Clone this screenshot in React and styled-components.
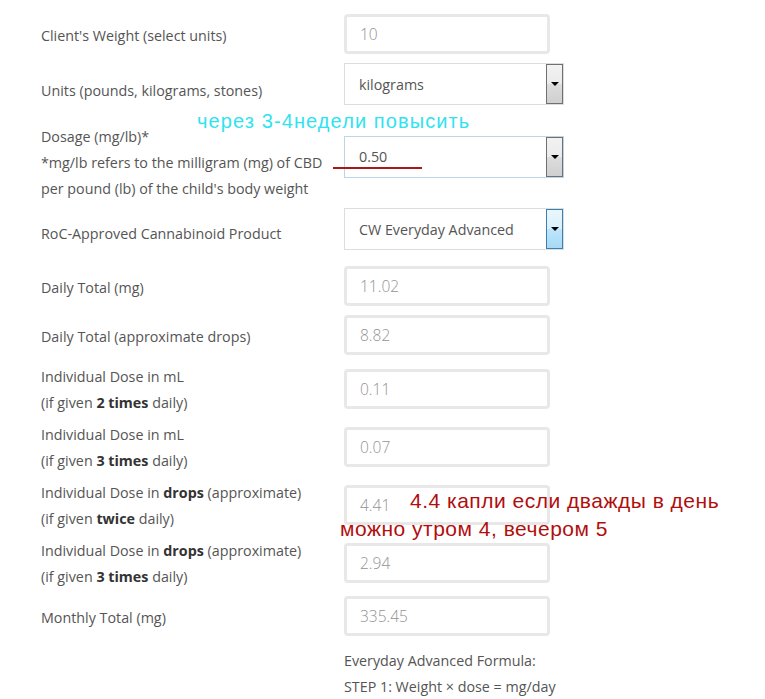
import styled, { createGlobalStyle } from "styled-components";

const GlobalStyle = createGlobalStyle`
  html, body {
    margin: 0;
    padding: 0;
    background: #fff;
  }
  body {
    font-family: "Open Sans", "Liberation Sans", sans-serif;
    font-size: 14.3px;
    color: #555;
  }
`;

const rows = [
  { label: ["Client's Weight (select units)"], type: "input", value: "10" },
  { label: ["Units (pounds, kilograms, stones)"], type: "select", value: "kilograms" },
  {
    label: [
      "Dosage (mg/lb)*",
      "*mg/lb refers to the milligram (mg) of CBD",
      "per pound (lb) of the child's body weight",
    ],
    type: "select",
    value: "0.50",
    variant: "focus",
  },
  {
    label: ["RoC-Approved Cannabinoid Product"],
    type: "select",
    value: "CW Everyday Advanced",
    variant: "hover",
    tight: true,
  },
  { label: ["Daily Total (mg)"], type: "input", value: "11.02" },
  { label: ["Daily Total (approximate drops)"], type: "input", value: "8.82" },
  { label: ["Individual Dose in mL", ["(if given ", <b key="b">2 times</b>, " daily)"]], type: "input", value: "0.11" },
  { label: ["Individual Dose in mL", ["(if given ", <b key="b">3 times</b>, " daily)"]], type: "input", value: "0.07" },
  {
    label: [
      ["Individual Dose in ", <b key="b">drops</b>, " (approximate)"],
      ["(if given ", <b key="b">twice</b>, " daily)"],
    ],
    type: "input",
    value: "4.41",
  },
  {
    label: [
      ["Individual Dose in ", <b key="b">drops</b>, " (approximate)"],
      ["(if given ", <b key="b">3 times</b>, " daily)"],
    ],
    type: "input",
    value: "2.94",
  },
  { label: ["Monthly Total (mg)"], type: "input", value: "335.45" },
];

export default function App() {
  return (
    <>
      <GlobalStyle />
      <Page>
        <Form>
          {rows.map((row, i) => (
            <Row key={i}>
              <Label>
                {row.label.map((line, j) => (
                  <Line key={j}>{line}</Line>
                ))}
              </Label>
              <Cell>
                {row.type === "input" ? (
                  <Input readOnly value={row.value} />
                ) : (
                  <SelectBox $variant={row.variant} $tight={row.tight}>
                    <SelectValue>{row.value}</SelectValue>
                    <ArrowButton $variant={row.variant}>
                      <Arrow />
                    </ArrowButton>
                  </SelectBox>
                )}
              </Cell>
            </Row>
          ))}
        </Form>
        <Formula>
          <Line>Everyday Advanced Formula:</Line>
          <Line>STEP 1: Weight × dose = mg/day</Line>
        </Formula>

        {/* handwritten notes on top of the screenshot */}
        <CyanNote>через 3-4недели повысить</CyanNote>
        <Underline />
        <RedNote>
          4.4 капли если дважды в день
          <br />
          можно утром 4, вечером 5
        </RedNote>
      </Page>
    </>
  );
}

const Page = styled.div`
  position: relative;
  width: 765px;
  height: 699px;
  overflow: hidden;
  padding: 11px 0 0 41px;
  box-sizing: border-box;
`;

const Form = styled.div`
  display: flex;
  flex-direction: column;
`;

const Row = styled.div`
  display: grid;
  grid-template-columns: 303px 1fr;
  align-items: center;
  padding: 3px 0;
`;

const Label = styled.div`
  line-height: 26px;
  color: #555;

  b {
    font-weight: 700;
    color: #333;
  }
`;

const Line = styled.div`
  white-space: nowrap;
`;

const Cell = styled.div`
  display: flex;
`;

const Input = styled.input`
  box-sizing: border-box;
  width: 206px;
  height: 40px;
  margin: 0 0 3px;
  padding: 0 0 0 13px;
  border: 3px solid #e8e8e8;
  border-radius: 4px;
  font-family: "Open Sans", sans-serif;
  font-weight: 300;
  font-size: 15.5px;
  color: #939393;
  background: #fff;
  outline: none;
`;

const SelectBox = styled.div`
  box-sizing: border-box;
  width: 220px;
  height: 42px;
  margin-bottom: ${(p) => (p.$tight ? "10px" : "13px")};
  display: flex;
  align-items: stretch;
  border: 1px solid ${(p) => (p.$variant === "focus" ? "#bcd6e8" : "#dddddd")};
  background: #fff;
`;

const SelectValue = styled.div`
  flex: 1;
  display: flex;
  align-items: center;
  padding-left: 14px;
  color: #555;
`;

const ArrowButton = styled.div`
  box-sizing: border-box;
  width: 17px;
  display: flex;
  align-items: center;
  justify-content: center;
  border: 1px solid ${(p) => (p.$variant === "hover" ? "#3c7fb1" : "#707070")};
  background: ${(p) =>
    p.$variant === "hover"
      ? "linear-gradient(#eaf6fd 0%, #d9f0fc 50%, #bee6fd 50%, #a7d9f5 100%)"
      : "linear-gradient(#f2f2f2 0%, #ebebeb 50%, #dddddd 50%, #cfcfcf 100%)"};
`;

const Arrow = styled.span`
  width: 0;
  height: 0;
  border-left: 4px solid transparent;
  border-right: 4px solid transparent;
  border-top: 4px solid #000;
`;

const Formula = styled.div`
  margin: 6px 0 0 303px;
  line-height: 26px;
  color: #555;
`;

const CyanNote = styled.div`
  position: absolute;
  left: 197px;
  top: 111px;
  font-family: "Liberation Sans", Arial, sans-serif;
  font-size: 20px;
  line-height: 20px;
  letter-spacing: 1.1px;
  color: #30e3f0;
  white-space: nowrap;
`;

const Underline = styled.div`
  position: absolute;
  left: 333px;
  top: 167px;
  width: 89px;
  height: 2px;
  background: #a81818;
`;

const RedNote = styled.div`
  position: absolute;
  left: 340px;
  top: 487px;
  text-indent: 70px;
  font-family: "Liberation Sans", Arial, sans-serif;
  font-size: 21px;
  line-height: 28px;
  letter-spacing: 0.5px;
  color: #b10e0e;
  white-space: nowrap;
`;
